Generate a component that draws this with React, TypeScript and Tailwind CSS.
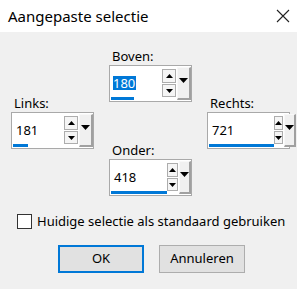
import React from "react";

type Spin = { label: string; value: string; bar: number; selected?: boolean };

function SpinBox({ label, value, bar, selected }: Spin) {
  return (
    <div className="flex flex-col">
      <div className="h-4 pl-[3px] text-[13px] leading-4 text-black">{label}</div>
      <div className="mt-[1px] flex h-[37px] w-[83px] border border-[#a9a9a9] bg-white">
        {/* tekstveld met voortgangsbalk */}
        <div className="flex flex-1 flex-col pt-[10px]">
          <div className="flex h-[14px] pl-[3px] leading-none">
            <span
              className={
                selected
                  ? "block h-[14px] bg-[#0078d7] pr-[1px] text-[13px] leading-[14px] text-white"
                  : "block h-[14px] pl-[1px] text-[13px] leading-[14px] text-black"
              }
            >
              {value}
            </span>
          </div>
          <div className="mt-auto mb-[1px] ml-[1px] h-[3px] bg-[#0078d7]" style={{ width: bar }} />
        </div>
        {/* op/neer knoppen */}
        <div className="mr-[1px] mt-[3px] flex w-[14px] flex-col">
          <div className="flex h-[14px] items-center justify-center border border-[#adadad] bg-[#f5f5f5]">
            <svg width="7" height="4" viewBox="0 0 7 4">
              <polygon points="3.5,0 7,4 0,4" fill="#000" />
            </svg>
          </div>
          <div className="mt-[1px] flex h-[13px] items-center justify-center border border-[#adadad] bg-[#f5f5f5]">
            <svg width="7" height="4" viewBox="0 0 7 4">
              <polygon points="0,0 7,0 3.5,4" fill="#000" />
            </svg>
          </div>
        </div>
        {/* uitklapknop */}
        <div className="my-[1px] flex w-[14px] items-start justify-center border-t border-l border-[#f8f8f8] border-r-2 border-b-2 border-r-[#a0a0a0] border-b-[#a0a0a0] bg-[#f0f0f0] pt-[10px]">
          <svg width="9" height="5" viewBox="0 0 9 5">
            <polygon points="0,0 9,0 4.5,5" fill="#000" />
          </svg>
        </div>
      </div>
    </div>
  );
}

export default function App() {
  return (
    <div
      className="h-[289px] w-[297px] overflow-hidden bg-[#f0f0f0]"
      style={{ fontFamily: '"Noto Sans", "Open Sans", sans-serif' }}
    >
      <div className="flex h-8 items-center justify-between bg-white pl-2 pr-[7px]">
        <span className="text-[15px] text-black">Aangepaste selectie</span>
        <svg width="14" height="14" viewBox="0 0 14 14">
          <path d="M1 1L13 13M13 1L1 13" stroke="#222" strokeWidth="1.1" />
        </svg>
      </div>

      <div className="grid grid-cols-[83px_83px_83px] items-center gap-x-[15px] pl-[11px] pt-[16px]">
        <div className="col-start-1 row-start-1">
          <SpinBox label="Links:" value="181" bar={15} />
        </div>
        <div className="col-start-2 row-start-1 flex flex-col gap-[40px]">
          <SpinBox label="Boven:" value="180" bar={23} selected />
          <SpinBox label="Onder:" value="418" bar={56} />
        </div>
        <div className="col-start-3 row-start-1">
          <SpinBox label="Rechts:" value="721" bar={65} />
        </div>
      </div>

      <label className="mt-[17px] ml-[17px] flex items-center gap-[5px]">
        <span className="h-[15px] w-[15px] border border-[#333] bg-white" />
        <span className="text-[13px] leading-4 text-black">Huidige selectie als standaard gebruiken</span>
      </label>

      <div className="mt-[16px] flex gap-[15px] pl-[58px]">
        <button className="h-[28px] w-[86px] border-2 border-[#0078d7] bg-[#e1e1e1] text-[13px] text-black">
          OK
        </button>
        <button className="h-[28px] w-[86px] border border-[#adadad] bg-[#e1e1e1] text-[13px] text-black">
          Annuleren
        </button>
      </div>
    </div>
  );
}
